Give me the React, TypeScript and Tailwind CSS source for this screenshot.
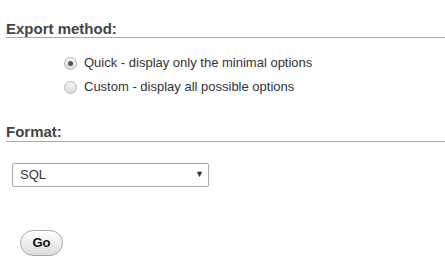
export default function App() {
  return (
    <div className="w-[445px] h-[271px] bg-white text-[#444] overflow-hidden" style={{ fontFamily: '"Liberation Sans", Arial, sans-serif' }}>
      <div className="pt-[20px] pl-[6px]">
        <h3 className="text-[15px] font-bold leading-[17px] text-[#444] border-b border-[#aaa] pb-[0px]">Export method:</h3>
        <div className="mt-[17px] pl-[58px] flex flex-col gap-[8px] text-[13px] text-[#333]">
          <label className="flex items-center gap-[7px] h-[16px]">
            <span className="w-[13px] h-[13px] rounded-full border border-[#b5b5b5] bg-gradient-to-b from-[#f6f6f6] to-[#dcdcdc] flex items-center justify-center">
              <span className="w-[5px] h-[5px] rounded-full bg-[#555]" />
            </span>
            <span>Quick - display only the minimal options</span>
          </label>
          <label className="flex items-center gap-[7px] h-[16px]">
            <span className="w-[13px] h-[13px] rounded-full border border-[#b5b5b5] bg-gradient-to-b from-[#f6f6f6] to-[#dcdcdc]" />
            <span>Custom - display all possible options</span>
          </label>
        </div>
        <h3 className="mt-[28px] text-[15px] font-bold leading-[17px] text-[#444] border-b border-[#aaa] pb-[1px]">Format:</h3>
        <div className="mt-[21px] ml-[6px] w-[197px] h-[24px] border border-[#aaa] rounded-[2px] flex items-center justify-between pl-[7px] pr-[4px] text-[13px] text-[#333]">
          <span>SQL</span>
          <span className="text-[9px] text-[#333]">▼</span>
        </div>
        <button className="mt-[43px] ml-[14px] w-[43px] h-[26px] rounded-full border border-[#aaa] bg-gradient-to-b from-white to-[#dcdcdc] text-[13px] font-bold text-[#111] flex items-center justify-center">Go</button>
      </div>
    </div>
  );
}
